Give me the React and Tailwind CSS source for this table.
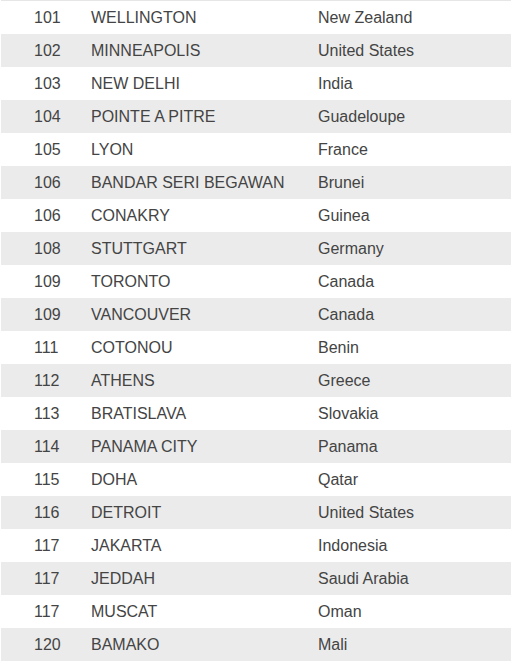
const rows = [
  ["101", "WELLINGTON", "New Zealand"],
  ["102", "MINNEAPOLIS", "United States"],
  ["103", "NEW DELHI", "India"],
  ["104", "POINTE A PITRE", "Guadeloupe"],
  ["105", "LYON", "France"],
  ["106", "BANDAR SERI BEGAWAN", "Brunei"],
  ["106", "CONAKRY", "Guinea"],
  ["108", "STUTTGART", "Germany"],
  ["109", "TORONTO", "Canada"],
  ["109", "VANCOUVER", "Canada"],
  ["111", "COTONOU", "Benin"],
  ["112", "ATHENS", "Greece"],
  ["113", "BRATISLAVA", "Slovakia"],
  ["114", "PANAMA CITY", "Panama"],
  ["115", "DOHA", "Qatar"],
  ["116", "DETROIT", "United States"],
  ["117", "JAKARTA", "Indonesia"],
  ["117", "JEDDAH", "Saudi Arabia"],
  ["117", "MUSCAT", "Oman"],
  ["120", "BAMAKO", "Mali"],
];

export default function App() {
  return (
    <div className="w-[513px] h-[662px] bg-white overflow-hidden font-['Liberation_Sans',Arial,sans-serif] text-[16px] text-[#444]">
      <div className="border-t border-[#e6e6e6] ml-px mr-[2px]">
        {rows.map((r, i) => (
          <div
            key={i}
            className={`flex items-center h-[33px] ${i % 2 === 1 ? "bg-[#ebebeb]" : "bg-white"}`}
          >
            <div className="w-[90px] pl-[33px] shrink-0">{r[0]}</div>
            <div className="w-[227px] shrink-0">{r[1]}</div>
            <div className="flex-1">{r[2]}</div>
          </div>
        ))}
      </div>
    </div>
  );
}
